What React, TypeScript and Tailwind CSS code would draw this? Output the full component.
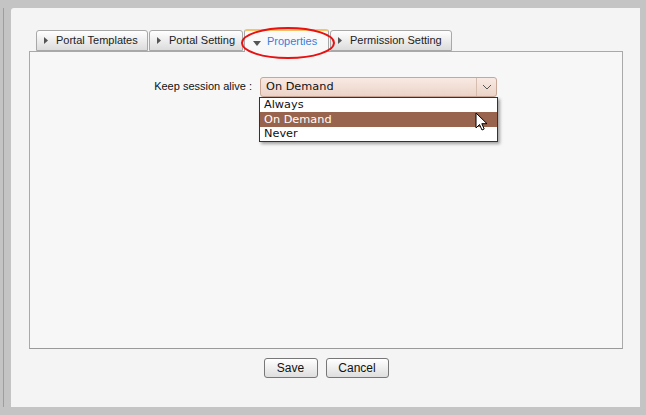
import React from "react";

const tabs = [
  { label: "Portal Templates", w: "w-[112px]", active: false },
  { label: "Portal Setting", w: "w-[94px]", active: false },
  { label: "Properties", w: "w-[85px]", active: true },
  { label: "Permission Setting", w: "w-[122px]", active: false },
];

function Tab({ label, w, active }: { label: string; w: string; active: boolean }) {
  if (active) {
    return (
      <div
        className={`${w} relative h-[23px] -mb-px flex items-center pl-[8px] gap-[6px] rounded-t-[3px] border border-b-0 border-[#a8a8a8] border-t-2 border-t-[#f2c36b] bg-gradient-to-b from-[#fafafa] to-[#f7f7f7] text-[#3b7dd8] text-[11px]`}
      >
        <svg width="8" height="5" viewBox="0 0 8 5" className="mt-[3px]">
          <path d="M0 0h8L4 5z" fill="#555" />
        </svg>
        <span>{label}</span>
        <svg
          width="100"
          height="36"
          viewBox="0 0 100 36"
          className="absolute left-[-7px] top-[-6px] pointer-events-none"
        >
          <ellipse cx="50" cy="18" rx="46" ry="15" fill="none" stroke="#e81010" strokeWidth="2" />
        </svg>
      </div>
    );
  }
  return (
    <div
      className={`${w} h-[21px] flex items-center pl-[7px] gap-[8px] rounded-t-[3px] border border-[#a8a8a8] bg-gradient-to-b from-[#ffffff] to-[#dcdcdc] text-[#222] text-[11px]`}
    >
      <svg width="4" height="7" viewBox="0 0 4 7">
        <path d="M0 0l4 3.5L0 7z" fill="#555" />
      </svg>
      <span>{label}</span>
    </div>
  );
}

export default function App() {
  return (
    <div
      className="w-[646px] h-[415px] bg-[#c4c4c4] flex pt-[8px] pb-[8px] pl-[3px] pr-[6px]"
      style={{ fontFamily: '"Liberation Sans", Arial, sans-serif' }}
    >
      <div className="w-px bg-[#9e9e9e] shrink-0" />
      <div className="w-[7px] shrink-0" />
      <div className="flex-1 bg-[#f4f4f4] rounded-tl-[3px] flex flex-col pl-[18px] pr-[17px] pt-[21px]">
        <div className="flex items-end gap-px pl-[7px] relative z-10">
          {tabs.map((t) => (
            <Tab key={t.label} {...t} />
          ))}
        </div>
        <div className="h-[298px] border border-[#a9a9a9] border-b-[#9a9a9a] bg-[#f7f7f7] relative">
          <div className="flex items-start pt-[25px]">
            <div className="w-[230px] text-right text-[11px] text-[#111] pr-[8px] pt-[1px]">
              Keep session alive :
            </div>
            <div className="relative">
              <div className="w-[237px] h-[20px] rounded-[3px] border border-[#c9a796] bg-gradient-to-b from-[#f8eae3] to-[#ecd3c8] flex items-center">
                <span
                  className="flex-1 pl-[5px] text-[11.3px] text-[#111]"
                  style={{ fontFamily: '"DejaVu Sans", sans-serif' }}
                >
                  On Demand
                </span>
                <div className="w-[20px] h-full border-l border-[#d7bcb0] flex items-center justify-center">
                  <svg width="10" height="6" viewBox="0 0 10 6">
                    <path d="M1 1l4 4 4-4" fill="none" stroke="#555" strokeWidth="1" />
                  </svg>
                </div>
              </div>
              <div
                className="absolute left-[-1px] top-[20px] w-[239px] bg-white border border-[#333] shadow-[2px_2px_3px_rgba(0,0,0,0.35)] text-[11.3px] text-[#111]"
                style={{ fontFamily: '"DejaVu Sans", sans-serif' }}
              >
                <div className="h-[14px] leading-[14px] pl-[4px]">Always</div>
                <div className="h-[15px] leading-[15px] pl-[4px] bg-[#99644d] text-white">On Demand</div>
                <div className="h-[14px] leading-[14px] pl-[4px]">Never</div>
                <svg
                  width="14"
                  height="20"
                  viewBox="0 0 14 20"
                  className="absolute left-[215px] top-[14px]"
                >
                  <path
                    d="M1 1v15l3.5-3.5 2.5 5.5 2.2-1-2.4-5.3H12z"
                    fill="#fff"
                    stroke="#000"
                    strokeWidth="1"
                    strokeLinejoin="round"
                  />
                </svg>
              </div>
            </div>
          </div>
        </div>
        <div className="flex justify-center gap-[8px] pt-[9px]">
          <button className="w-[54px] h-[20px] rounded-[3px] border border-[#777] bg-gradient-to-b from-[#ffffff] to-[#dedede] text-[12px] text-[#111]">
            Save
          </button>
          <button className="w-[63px] h-[20px] rounded-[3px] border border-[#777] bg-gradient-to-b from-[#ffffff] to-[#dedede] text-[12px] text-[#111]">
            Cancel
          </button>
        </div>
      </div>
    </div>
  );
}
